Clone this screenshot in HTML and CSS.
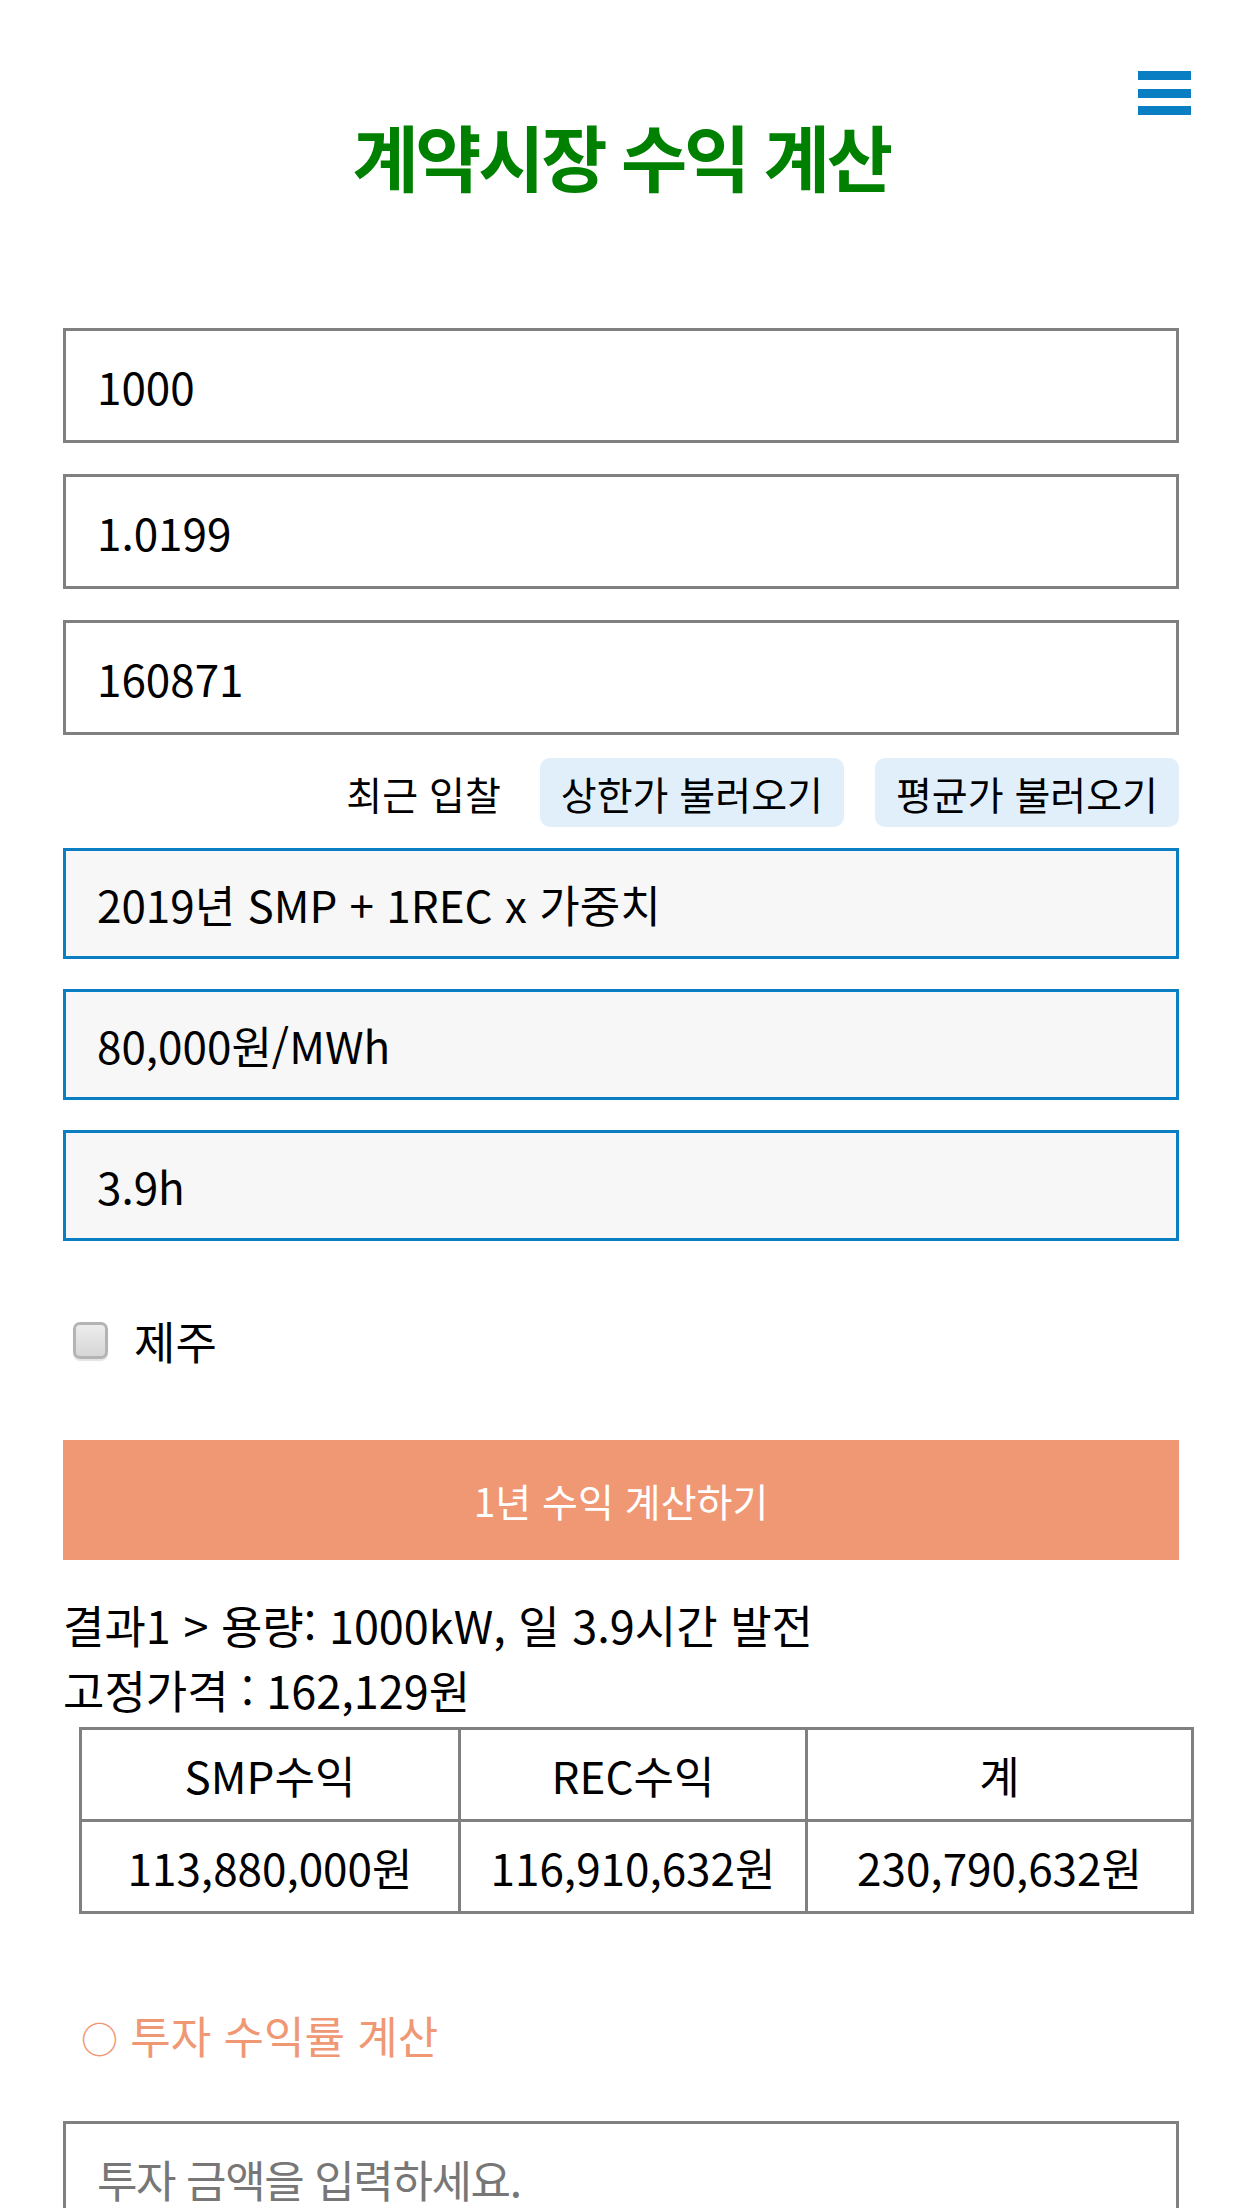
FILE: index.html
```html
<!DOCTYPE html>
<html lang="ko">
  <head>
    <meta charset="UTF-8" />
    <meta name="viewport" content="width=device-width, initial-scale=1.0" />
    <title>계약시장 수익 계산</title>
    <link rel="stylesheet" href="styles.css">
  </head>
  <body>
    <div class="page">
      <div class="topbar">
        <button class="menu-btn" aria-label="메뉴">
          <span></span><span></span><span></span>
        </button>
      </div>

      <h1>계약시장 수익 계산</h1>

      <form id="calcForm">
        <input type="number" class="field" id="capacity" value="1000" />
        <input type="number" class="field" id="weight" value="1.0199" />
        <input type="number" class="field" id="recPrice" value="160871" />

        <div class="bid-row">
          <span class="bid-label">최근 입찰</span>
          <button type="button" class="bid-btn">상한가 불러오기</button>
          <button type="button" class="bid-btn">평균가 불러오기</button>
        </div>

        <input type="text" class="field readonly first" value="2019년 SMP + 1REC x 가중치" readonly />
        <input type="text" class="field readonly" value="80,000원/MWh" readonly />
        <input type="text" class="field readonly" value="3.9h" readonly />

        <label class="check-row">
          <input type="checkbox" id="jeju" />
          <span>제주</span>
        </label>

        <button type="submit" class="calc-btn">1년 수익 계산하기</button>
      </form>

      <div class="result">
        <p>결과1 &gt; 용량: 1000kW, 일 3.9시간 발전</p>
        <p>고정가격 : 162,129원</p>
      </div>

      <table class="result-table">
        <tr>
          <th class="col-smp">SMP수익</th>
          <th class="col-rec">REC수익</th>
          <th>계</th>
        </tr>
        <tr>
          <td>113,880,000원</td>
          <td>116,910,632원</td>
          <td>230,790,632원</td>
        </tr>
      </table>

      <h2 class="section-title"><span class="bullet">○</span> 투자 수익률 계산</h2>

      <input type="number" class="field" id="invest" placeholder="투자 금액을 입력하세요." />
    </div>
  </body>
</html>
```

FILE: styles.css
```css
body {
  margin: 0;
  font-family: "Noto Sans CJK KR", "Noto Sans", sans-serif;
  font-size: 44px;
  color: #000;
  background: #fff;
}
.page {
  padding: 0 63px;
}
.topbar {
  display: flex;
  justify-content: flex-end;
  padding-top: 71px;
}
.menu-btn {
  width: 53px;
  height: 44px;
  margin-right: -12px;
  padding: 0;
  border: none;
  background: none;
  display: flex;
  flex-direction: column;
  justify-content: space-between;
  cursor: pointer;
}
.menu-btn span {
  display: block;
  height: 9px;
  background-color: #0a7ec2;
}
h1 {
  margin: 0;
  font-size: 72px;
  line-height: 80px;
  letter-spacing: -3.3px;
  text-align: center;
  color: #008000;
}
form {
  margin-top: 133px;
}
.field {
  display: block;
  width: 100%;
  box-sizing: border-box;
  height: 115px;
  margin: 0 0 31px;
  padding: 0 31px;
  border: 3px solid #808080;
  border-radius: 0;
  font-family: inherit;
  font-size: 44px;
  color: #000;
  background: #fff;
  outline: none;
}
.field::placeholder {
  color: #777;
  letter-spacing: -1.4px;
}
.bid-row {
  display: flex;
  justify-content: flex-end;
  align-items: center;
  margin: -8px 0 21px;
}
.bid-label {
  font-size: 39px;
  margin-right: 39px;
}
.bid-btn {
  height: 69px;
  padding: 0 21px;
  border: none;
  border-radius: 10px;
  background-color: #e1effa;
  font-family: inherit;
  font-size: 39px;
  color: #000;
  cursor: pointer;
}
.bid-btn + .bid-btn {
  margin-left: 31px;
}
.field.readonly {
  height: 111px;
  margin-bottom: 30px;
  border-color: #0a7ec2;
  background-color: #f7f7f7;
}
.check-row {
  display: flex;
  align-items: center;
  margin: 69px 0 0 10px;
  height: 60px;
}
.check-row input {
  appearance: none;
  -webkit-appearance: none;
  width: 35px;
  height: 37px;
  margin: 0 26px 0 0;
  border: 3px solid #b4b4b4;
  border-radius: 7px;
  background: linear-gradient(#ececec, #d6d6d6);
  box-shadow: 0 2px 1px #e4e4e4;
}
.check-row span {
  font-size: 45px;
}
.calc-btn {
  display: block;
  width: 100%;
  height: 120px;
  margin-top: 70px;
  border: none;
  background-color: #f09774;
  color: #fff;
  font-family: inherit;
  font-size: 39px;
  cursor: pointer;
}
.result {
  margin-top: 32px;
  font-size: 45px;
}
.result p {
  margin: 0;
  line-height: 65px;
}
.result-table {
  margin: 5px 0 0 16px;
  width: 1115px;
  border-collapse: collapse;
  table-layout: fixed;
}
.result-table th,
.result-table td {
  height: 89px;
  padding: 0;
  border: 3px solid #808080;
  font-weight: normal;
  text-align: center;
}
.result-table .col-smp {
  width: 376px;
}
.result-table .col-rec {
  width: 344px;
}
.section-title {
  margin: 92px 0 54px 18px;
  font-size: 44px;
  font-weight: normal;
  line-height: 58px;
  color: #f09774;
}
.section-title .bullet {
  font-size: 37px;
}
```
